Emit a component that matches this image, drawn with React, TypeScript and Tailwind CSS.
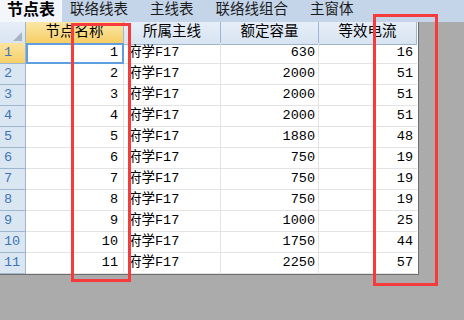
import React from "react";

const rows: [number, number, number][] = [
  [1, 630, 16],
  [2, 2000, 51],
  [3, 2000, 51],
  [4, 2000, 51],
  [5, 1880, 48],
  [6, 750, 19],
  [7, 750, 19],
  [8, 750, 19],
  [9, 1000, 25],
  [10, 1750, 44],
  [11, 2250, 57],
];

const tabs = ["联络线表", "主线表", "联络线组合", "主窗体"];

const font = "font-['Liberation_Mono','Noto_Sans_CJK_SC',monospace]";

function HeaderCell({ label, active }: { label: string; active?: boolean }) {
  return (
    <div
      className={`flex items-center justify-center border-r border-b border-[#9eb6ce] text-[14.5px] text-black ${
        active ? "bg-gradient-to-b from-[#fbe7a6] to-[#f6cc5f]" : "bg-gradient-to-b from-[#e6eef8] to-[#d8e4f2]"
      }`}
    >
      {label}
    </div>
  );
}

export default function App() {
  return (
    <div className={`relative w-[464px] h-[320px] overflow-hidden bg-[#ababab] ${font}`}>
      <div className="flex h-[22px] items-stretch bg-[#c4d5ea]">
        <div className="flex items-center bg-[#f3f6fb] px-[7px] text-[16px] font-bold text-black">节点表</div>
        <div className="ml-[8px] flex items-center gap-[22px] text-[14.5px] text-[#1b1b1b]">
          {tabs.map((t) => (
            <span key={t}>{t}</span>
          ))}
        </div>
      </div>

      <div className="w-[419px] border-r border-b border-[#6e6e6e] bg-white">
        <div className="grid h-[21px] grid-cols-[26px_98px_97px_98px_98px]">
          <div className="flex items-end justify-end border-r border-b border-[#9eb6ce] bg-gradient-to-b from-[#e6eef8] to-[#d8e4f2] p-[3px]">
            <svg width="9" height="9" viewBox="0 0 9 9">
              <polygon points="9,0 9,9 0,9" fill="#a9b5c3" />
            </svg>
          </div>
          <HeaderCell label="节点名称" active />
          <HeaderCell label="所属主线" />
          <HeaderCell label="额定容量" />
          <HeaderCell label="等效电流" />
        </div>

        {rows.map(([n, cap, cur]) => (
          <div key={n} className="grid h-[21px] grid-cols-[26px_98px_97px_98px_98px] text-[13.5px] text-black">
            <div
              className={`flex items-center border-r border-b border-[#9eb6ce] pl-[4px] text-[#3d76b3] ${
                n === 1 ? "bg-gradient-to-b from-[#fbe3a0] to-[#f6cf68]" : "bg-[#dbe6f3]"
              }`}
            >
              {n}
            </div>
            <div
              className={`flex items-center justify-end border-r border-b border-[#e3e3e3] pr-[5px] ${
                n === 1 ? "outline-2 outline-[#5f9fe0] -outline-offset-2" : ""
              }`}
            >
              {n}
            </div>
            <div className="flex items-center border-r border-b border-[#e3e3e3] pl-[4px]">府学F17</div>
            <div className="flex items-center justify-end border-r border-b border-[#e3e3e3] pr-[3px]">{cap}</div>
            <div className="flex items-center justify-end border-b border-[#e3e3e3] pr-[4px]">{cur}</div>
          </div>
        ))}
      </div>

      <div className="absolute left-[71px] top-[23px] h-[259px] w-[60px] border-[3px] border-[#f53b3b]" />
      <div className="absolute left-[373px] top-[14px] h-[272px] w-[65px] border-[3px] border-[#f53b3b]" />
    </div>
  );
}
